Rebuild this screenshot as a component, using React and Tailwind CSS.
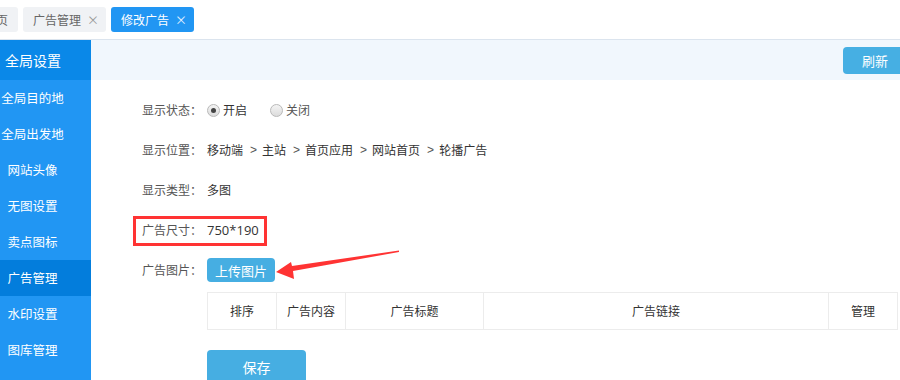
import React from "react";

const font = { fontFamily: '"Noto Sans CJK SC", "Liberation Sans", sans-serif' };

function Sep() {
  return <span className="ml-[7px] mr-[5px] text-[#555]" style={{ fontFamily: '"Liberation Sans", sans-serif' }}>&gt;</span>;
}

function Radio({ checked }) {
  return (
    <span className="w-[13px] h-[13px] rounded-full border border-[#b9b9b9] bg-gradient-to-b from-[#f4f4f4] to-[#dcdcdc] flex items-center justify-center">
      {checked && <span className="w-[5px] h-[5px] rounded-full bg-[#444]" />}
    </span>
  );
}

export default function App() {
  const items = ["全局目的地", "全局出发地", "网站头像", "无图设置", "卖点图标", "广告管理", "水印设置", "图库管理"];
  return (
    <div className="w-[900px] h-[380px] overflow-hidden relative bg-white text-[12px] leading-none" style={font}>
      {/* Tab bar */}
      <div className="h-[40px] border-b border-[#dbe4ee] flex items-center gap-[5px] ml-[-26px]">
        <div className="h-[25px] px-[10px] rounded-[3px] bg-[#f0f2f5] text-[#666] flex items-center whitespace-nowrap">首页</div>
        <div className="h-[25px] pl-[10px] pr-[7px] rounded-[3px] bg-[#f0f2f5] text-[#666] flex items-center whitespace-nowrap">
          广告管理<span className="ml-[6px] text-[#999] text-[12px]">×</span>
        </div>
        <div className="h-[25px] pl-[10px] pr-[7px] rounded-[3px] bg-[#2196f3] text-white flex items-center whitespace-nowrap">
          修改广告<span className="ml-[6px] text-[#e6f2ff] text-[12px]">×</span>
        </div>
      </div>
      <div className="flex h-[340px]">
        {/* Sidebar */}
        <div className="w-[91px] bg-[#2196f3] text-white">
          <div className="h-[40px] bg-[#0a88e8] flex items-center">
            <div className="w-[66px] text-center text-[14px] whitespace-nowrap">全局设置</div>
          </div>
          {items.map((t) => (
            <div key={t} className={"h-[36px] flex items-center " + (t === "广告管理" ? "bg-[#037ddc]" : "")}>
              <div className="w-[65px] flex justify-center text-[12.5px] whitespace-nowrap">{t}</div>
            </div>
          ))}
        </div>
        {/* Main */}
        <div className="flex-1 overflow-hidden">
          <div className="h-[40px] bg-[#f1f7fd] flex items-center justify-end mr-[-7px]">
            <button className="h-[27px] w-[64px] rounded-[4px] bg-[#46afe3] text-white text-[13px]">刷新</button>
          </div>
          <div className="pl-[51px] pt-[10px]">
            <div className="h-[40px] flex items-center">
              <span className="w-[65px] text-[#555]">显示状态：</span>
              <Radio checked />
              <span className="ml-[3px] text-[#333]">开启</span>
              <span className="ml-[23px]"><Radio /></span>
              <span className="ml-[3px] text-[#555]">关闭</span>
            </div>
            <div className="h-[40px] flex items-center text-[#333]">
              <span className="w-[65px] text-[#555]">显示位置：</span>
              <span>移动端</span><Sep /><span>主站</span><Sep /><span>首页应用</span><Sep /><span>网站首页</span><Sep /><span>轮播广告</span>
            </div>
            <div className="h-[40px] flex items-center text-[#333]">
              <span className="w-[65px] text-[#555]">显示类型：</span>
              <span>多图</span>
            </div>
            <div className="h-[40px] flex items-center relative text-[#333]">
              <span className="w-[65px] text-[#555]">广告尺寸：</span>
              <span className="text-[13px]" style={{ fontFamily: '"Open Sans", "Noto Sans CJK SC", sans-serif' }}>750*190</span>
              <div className="absolute left-[-9px] top-[6px] w-[134px] h-[30px] border-[3px] border-[#f33]" />
            </div>
            <div className="h-[40px] flex items-center">
              <span className="w-[65px] text-[#555]">广告图片：</span>
              <button className="h-[24px] w-[68px] rounded-[4px] bg-[#46aee2] text-white text-[13px]">上传图片</button>
            </div>
            <div className="ml-[65px] mt-[2px]">
              <div className="w-[691px] h-[38px] border border-[#ececec] flex text-[#333]">
                <div className="w-[69px] flex items-center justify-center border-r border-[#ececec]">排序</div>
                <div className="w-[69px] flex items-center justify-center border-r border-[#ececec]">广告内容</div>
                <div className="w-[138px] flex items-center justify-center border-r border-[#ececec]">广告标题</div>
                <div className="w-[345px] flex items-center justify-center border-r border-[#ececec]">广告链接</div>
                <div className="flex-1 flex items-center justify-center">管理</div>
              </div>
              <button className="mt-[20px] h-[34px] w-[99px] rounded-[4px] bg-[#46aee2] text-white text-[14px]">保存</button>
            </div>
          </div>
        </div>
      </div>
      {/* Arrow annotation */}
      <svg className="absolute left-0 top-0 pointer-events-none" width="900" height="380">
        <polygon points="399,250.5 292,266 291,262 276,272 294,279 293,271 399,252" fill="#f33" />
      </svg>
    </div>
  );
}
